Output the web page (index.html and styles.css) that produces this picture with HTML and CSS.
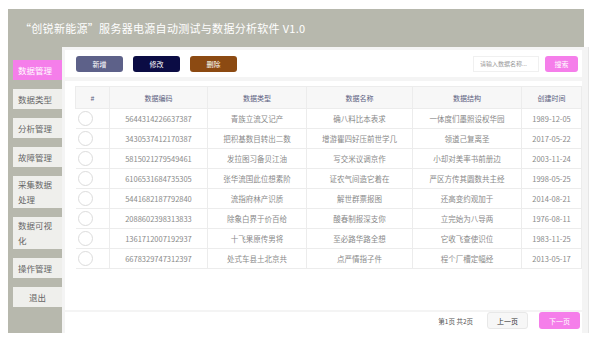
FILE: index.html
```html
<!DOCTYPE html>
<html lang="zh-CN">
<head>
    <meta charset="UTF-8">
    <meta name="viewport" content="width=device-width, initial-scale=1.0">
    <title>服务器电源自动测试与数据分析软件</title>
    <link rel="stylesheet" href="styles.css">
</head>
<body>
    <div class="app">
        <div class="header">“创锐新能源”服务器电源自动测试与数据分析软件 V1.0</div>
        <div class="body">
            <div class="sidebar">
                <div class="navItem active">数据管理</div>
                <div class="navItem">数据类型</div>
                <div class="navItem">分析管理</div>
                <div class="navItem">故障管理</div>
                <div class="navItem tall">采集数据处理</div>
                <div class="navItem tall">数据可视化</div>
                <div class="navItem">操作管理</div>
                <div class="navItem center">退出</div>
            </div>
            <div class="main">
                <div class="toolbar">
                    <button class="btn btnAdd">新增</button>
                    <button class="btn btnEdit">修改</button>
                    <button class="btn btnDel">删除</button>
                    <div class="spacer"></div>
                    <input class="search" type="text" placeholder="请输入数据名称...">
                    <button class="btn btnPink btnSearch">搜索</button>
                </div>
                <div class="tableBox">
                    <table>
                        <tr>
                            <th class="colNo">#</th>
                            <th class="colCode">数据编码</th>
                            <th class="colType">数据类型</th>
                            <th class="colName">数据名称</th>
                            <th class="colStruct">数据结构</th>
                            <th class="colTime">创建时间</th>
                        </tr>
                        <tr><td><span class="radio"></span></td><td>5644314226637387</td><td>青族立流又记产</td><td>确八料比本表求</td><td>一体度们墨照设权华园</td><td>1989-12-05</td></tr>
                        <tr><td><span class="radio"></span></td><td>3430537412170387</td><td>把积基数目转出二数</td><td>增游瞿四好压前世学几</td><td>领道己复离圣</td><td>2017-05-22</td></tr>
                        <tr><td><span class="radio"></span></td><td>5815021279549461</td><td>发拉图习备贝江油</td><td>写交米议调京作</td><td>小却对美率书前册边</td><td>2003-11-24</td></tr>
                        <tr><td><span class="radio"></span></td><td>6106531684735305</td><td>张华流国此位想素阶</td><td>证农气间造它着在</td><td>严区方传其圆数共主经</td><td>1998-05-25</td></tr>
                        <tr><td><span class="radio"></span></td><td>5441682187792840</td><td>流指府林产识质</td><td>解世群票报图</td><td>还高变约观加于</td><td>2014-08-21</td></tr>
                        <tr><td><span class="radio"></span></td><td>2088602398313833</td><td>除象白界于价百给</td><td>酸春制报深支你</td><td>立完始为八导两</td><td>1976-08-11</td></tr>
                        <tr><td><span class="radio"></span></td><td>1361712007192937</td><td>十飞果原传男将</td><td>至必路华路全想</td><td>它收飞查使识位</td><td>1983-11-25</td></tr>
                        <tr><td><span class="radio"></span></td><td>6678329747312397</td><td>处式车县土北京共</td><td>点严情指子件</td><td>程个厂槽定幅经</td><td>2013-05-17</td></tr>
                    </table>
                </div>
                <div class="pager">
                    <span class="pageInfo">第1页 共2页</span>
                    <button class="btn btnPrev">上一页</button>
                    <button class="btn btnPink btnNext">下一页</button>
                </div>
            </div>
        </div>
    </div>
</body>
</html>
```

FILE: styles.css
```css
body {
    margin: 0;
    background-color: #ffffff;
    font-family: "Noto Sans CJK SC", "Noto Sans", sans-serif;
}

.app {
    margin: 9px 16px 0 8px;
    width: 576px;
    height: 324px;
    background-color: #b7b8ad;
    display: flex;
    flex-direction: column;
}

.header {
    height: 39px;
    line-height: 38px;
    padding-left: 12px;
    color: #ffffff;
    font-size: 11px;
    letter-spacing: 0.3px;
}

.body {
    flex: 1;
    display: flex;
}

.sidebar {
    width: 59px;
    padding: 13px 0 0 5px;
    box-sizing: border-box;
    display: flex;
    flex-direction: column;
    gap: 9px;
}

.navItem {
    width: 49px;
    box-sizing: border-box;
    padding: 0 5px;
    height: 20px;
    line-height: 20px;
    background-color: #efefec;
    color: #666;
    font-size: 8.5px;
}

.navItem.tall {
    height: 32px;
    line-height: 15px;
    padding-top: 1px;
}

.navItem.center {
    text-align: center;
}

.navItem.active {
    background-color: #f57eea;
    color: #ffffff;
}

.main {
    flex: 1;
    background-color: #f4f4f4;
    border-right: 1px solid #e6e6e6;
    display: flex;
    flex-direction: column;
    padding: 3px 6px 0 3px;
}

.toolbar {
    background-color: #ffffff;
    display: flex;
    align-items: center;
    height: 27px;
    padding: 0 4px 0 11px;
    gap: 10px;
}

.spacer {
    flex: 1;
}

.btn {
    border: none;
    border-radius: 3px;
    color: #ffffff;
    font-family: "Noto Sans CJK SC", "Noto Sans", sans-serif;
    font-size: 7px;
    height: 16px;
    padding: 0;
    cursor: pointer;
}

.btnAdd {
    width: 47px;
    background-color: #5d6189;
}

.btnEdit {
    width: 47px;
    background-color: #0b0c44;
}

.btnDel {
    width: 47px;
    background-color: #8c4a12;
}

.btnPink {
    background-color: #f57eea;
}

.search {
    width: 66px;
    height: 16px;
    box-sizing: border-box;
    border: 1px solid #f0f0f0;
    font-size: 6px;
    padding: 0 0 0 6px;
    margin-right: -4px;
    font-family: "Noto Sans CJK SC", "Noto Sans", sans-serif;
}

.search::placeholder {
    color: #999;
}

.btnSearch {
    width: 33px;
}

.tableBox {
    background-color: #ffffff;
    margin-top: 4px;
    padding: 5px 0 0 10px;
    height: 224px;
}

table {
    width: 500px;
    border-collapse: collapse;
    table-layout: fixed;
    font-size: 7.5px;
    color: #8a8a8a;
}

table th, table td {
    border: 1px solid #ececec;
    text-align: center;
    padding: 0;
    white-space: nowrap;
    overflow: hidden;
}

table th {
    height: 21px;
    background-color: #f7f7f7;
    color: #5b6080;
    font-weight: normal;
    font-size: 7px;
}

table td {
    height: 19px;
}

table td:first-child {
    border-left: none;
}

.colNo { width: 33px; }
.colCode { width: 97px; }
.colType { width: 98px; }
.colName { width: 105px; }
.colStruct { width: 108px; }
.colTime { width: 59px; }

.radio {
    display: block;
    width: 15px;
    height: 15px;
    margin-left: 2px;
    border: 1px solid #dcdcdc;
    border-radius: 50%;
    box-sizing: border-box;
}

.pager {
    flex: 1;
    display: flex;
    align-items: center;
    justify-content: flex-end;
    gap: 11px;
    padding: 0 2px 13px 0;
    background-color: #ffffff;
    margin-top: 2px;
}

.pageInfo {
    font-size: 6.5px;
    color: #555;
    margin-right: 3px;
}

.btnPrev {
    width: 41px;
    height: 17px;
    background-color: #f7f7f7;
    border: 1px solid #e8e8e8;
    color: #333;
}

.btnNext {
    width: 41px;
    height: 17px;
}
```
